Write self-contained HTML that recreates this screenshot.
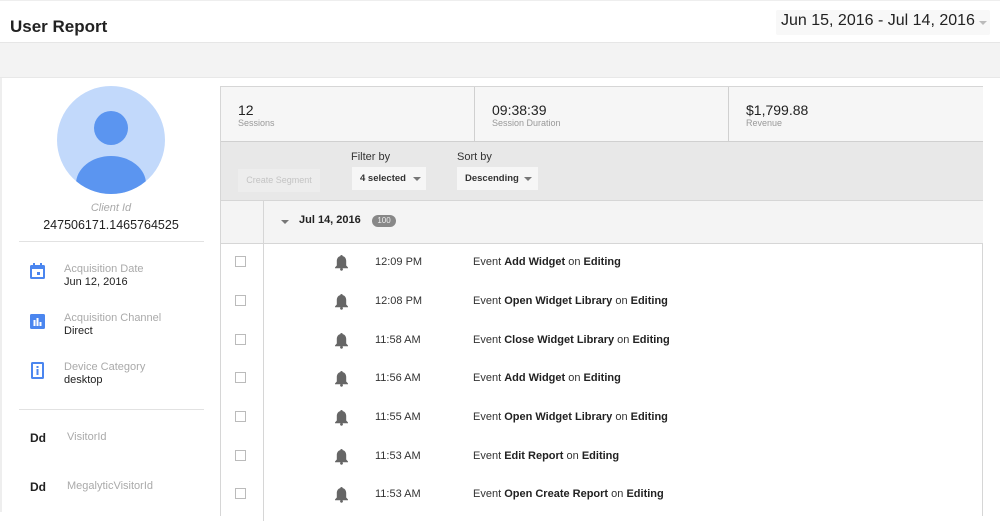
<!DOCTYPE html>
<html><head><style>
*{margin:0;padding:0;box-sizing:border-box}
body{width:1000px;height:512px;overflow:hidden;background:#fff;font-family:"Liberation Sans",Arial,sans-serif;color:#222;position:relative}
.a{position:absolute}
.hdr{left:0;top:0;width:1000px;height:43px;border-bottom:1px solid #e6e6e6;border-top:1px solid #eee}
.band{left:0;top:43px;width:1000px;height:35px;background:#f3f3f3;border-bottom:1px solid #e8e8e8}
.panel{left:220px;top:86px;width:763px;height:430px;border:1px solid #d6d6d6;border-bottom:none}
.stat{top:0;height:55px;background:#f6f6f6;border-right:1px solid #d0d0d0;border-bottom:1px solid #d0d0d0}
.stat b{font-weight:normal;font-size:14px;position:absolute;left:17px;top:15px;color:#222}
.stat i{font-style:normal;font-size:9px;color:#999;position:absolute;left:17px;top:31px}
.sel{background:#f6f6f6;font-size:9.5px;font-weight:bold;color:#333;height:23px;line-height:23px;padding-left:8px}
.tri{display:inline-block;border-left:4px solid transparent;border-right:4px solid transparent;border-top:4px solid #777;position:absolute;top:10px}
.row{left:0;width:763px;height:39px;font-size:11px}
.cb{position:absolute;left:14px;top:12px;width:11px;height:11px;border:1px solid #bbb}
.bell{position:absolute;left:113px;top:10px}
.tm{position:absolute;left:154px;top:12px;color:#333}
.ev{position:absolute;left:252px;top:12px;color:#333}
.ev b{color:#222}
.lab{color:#aaa;font-size:11px}
.val{color:#222;font-size:11px}
</style></head><body>
<div class="a hdr"></div>
<div class="a" style="left:10px;top:17px;font-size:17px;font-weight:bold;color:#222">User Report</div>
<div class="a" style="left:776px;top:10px;width:214px;height:25px;background:#f8f8f8;border-radius:2px"></div>
<div class="a" style="left:781px;top:12px;font-size:16px;color:#222">Jun 15, 2016 - Jul 14, 2016</div>
<div class="a tri" style="left:979px;top:21px;border-top-color:#bbb"></div>
<div class="a band"></div>
<div class="a" style="left:0;top:78px;width:2px;height:434px;background:#eee"></div>
<!-- avatar -->
<svg class="a" style="left:57px;top:86px" width="108" height="108" viewBox="0 0 108 108">
<defs><clipPath id="c"><circle cx="54" cy="54" r="54"/></clipPath></defs>
<circle cx="54" cy="54" r="54" fill="#c2d9fb"/>
<g clip-path="url(#c)"><circle cx="54" cy="42" r="17" fill="#5b95f0"/><ellipse cx="54" cy="98" rx="35" ry="28" fill="#5b95f0"/></g>
</svg>
<div class="a" style="left:0;width:222px;top:202px;text-align:center;font-size:11px;font-style:italic;color:#aaa">Client Id</div>
<div class="a" style="left:0;width:222px;top:218px;text-align:center;font-size:12.5px;color:#222">247506171.1465764525</div>
<div class="a" style="left:19px;top:241px;width:185px;height:1px;background:#e2e2e2"></div>
<svg class="a" style="left:29px;top:263px" width="17" height="17" viewBox="0 0 17 17"><rect x="1" y="2" width="15" height="14" rx="1.5" fill="#4b86ef"/><rect x="3" y="6" width="11" height="8" fill="#fff"/><rect x="8" y="9" width="3" height="3" fill="#4b86ef"/><rect x="4" y="0" width="2" height="4" fill="#4b86ef"/><rect x="11" y="0" width="2" height="4" fill="#4b86ef"/></svg>
<div class="a lab" style="left:64px;top:263px">Acquisition Date</div>
<div class="a val" style="left:64px;top:276px">Jun 12, 2016</div>
<svg class="a" style="left:29px;top:313px" width="17" height="17" viewBox="0 0 17 17"><rect x="1" y="1" width="15" height="15" rx="1.5" fill="#4b86ef"/><rect x="4.5" y="7" width="2" height="6" fill="#fff"/><rect x="7.5" y="5" width="2" height="8" fill="#fff"/><rect x="10.5" y="9" width="2" height="4" fill="#fff"/></svg>
<div class="a lab" style="left:64px;top:312px">Acquisition Channel</div>
<div class="a val" style="left:64px;top:325px">Direct</div>
<svg class="a" style="left:30px;top:361px" width="15" height="19" viewBox="0 0 15 19"><rect x="1" y="1" width="13" height="17" rx="1.5" fill="#4b86ef"/><rect x="3" y="3" width="9" height="13" fill="#fff"/><rect x="6.5" y="5" width="2" height="2" fill="#4b86ef"/><rect x="6.5" y="8" width="2" height="6" fill="#4b86ef"/></svg>
<div class="a lab" style="left:64px;top:361px">Device Category</div>
<div class="a val" style="left:64px;top:374px">desktop</div>
<div class="a" style="left:19px;top:409px;width:185px;height:1px;background:#e2e2e2"></div>
<div class="a" style="left:30px;top:431px;font-size:12px;font-weight:bold">Dd</div>
<div class="a lab" style="left:67px;top:431px">VisitorId</div>
<div class="a" style="left:30px;top:480px;font-size:12px;font-weight:bold">Dd</div>
<div class="a lab" style="left:67px;top:480px">MegalyticVisitorId</div>

<div class="a panel">
 <div class="a stat" style="left:0;width:254px"><b>12</b><i>Sessions</i></div>
 <div class="a stat" style="left:254px;width:254px"><b>09:38:39</b><i>Session Duration</i></div>
 <div class="a stat" style="left:508px;width:254px;border-right:none"><b>$1,799.88</b><i>Revenue</i></div>
 <div class="a" style="left:0;top:55px;width:762px;height:59px;background:#e8e8e8;border-bottom:1px solid #d6d6d6"></div>
 <div class="a" style="left:17px;top:82px;width:82px;height:23px;background:#ededed;color:#c4c4c4;font-size:9px;line-height:23px;text-align:center">Create Segment</div>
 <div class="a" style="left:130px;top:64px;font-size:11px;color:#333">Filter by</div>
 <div class="a sel" style="left:131px;top:80px;width:74px">4 selected<span class="tri" style="left:61px"></span></div>
 <div class="a" style="left:236px;top:64px;font-size:11px;color:#333">Sort by</div>
 <div class="a sel" style="left:236px;top:80px;width:81px">Descending<span class="tri" style="left:67px"></span></div>
 <div class="a" style="left:0;top:114px;width:762px;height:43px;background:#f4f4f4;border-bottom:1px solid #d6d6d6"></div>
 <div class="a" style="left:42px;top:114px;width:1px;height:320px;background:#d6d6d6"></div>
 <span class="tri" style="left:60px;top:133px"></span>
 <div class="a" style="left:78px;top:127px;font-size:11px;font-weight:bold">Jul 14, 2016</div>
 <div class="a" style="left:151px;top:128px;width:24px;height:12px;border-radius:6px;background:#888;color:#eee;font-size:8px;line-height:12px;text-align:center">100</div>
 <div class="a row" style="top:157px"><div class="cb"></div><svg class="bell" width="15" height="17" viewBox="0 0 15 17"><path d="M7.5 1c.8 0 1.2.5 1.2 1.1C11 2.7 12.2 4.6 12.2 7v4.5L14 13.5v.7H1v-.7l1.8-2V7c0-2.4 1.2-4.3 3.5-4.9C6.3 1.5 6.7 1 7.5 1z" fill="#666"/><circle cx="7.5" cy="15.3" r="1.4" fill="#666"/></svg><div class="tm">12:09 PM</div><div class="ev">Event <b>Add Widget</b> on <b>Editing</b></div></div>
 <div class="a row" style="top:196px"><div class="cb"></div><svg class="bell" width="15" height="17" viewBox="0 0 15 17"><path d="M7.5 1c.8 0 1.2.5 1.2 1.1C11 2.7 12.2 4.6 12.2 7v4.5L14 13.5v.7H1v-.7l1.8-2V7c0-2.4 1.2-4.3 3.5-4.9C6.3 1.5 6.7 1 7.5 1z" fill="#666"/><circle cx="7.5" cy="15.3" r="1.4" fill="#666"/></svg><div class="tm">12:08 PM</div><div class="ev">Event <b>Open Widget Library</b> on <b>Editing</b></div></div>
 <div class="a row" style="top:235px"><div class="cb"></div><svg class="bell" width="15" height="17" viewBox="0 0 15 17"><path d="M7.5 1c.8 0 1.2.5 1.2 1.1C11 2.7 12.2 4.6 12.2 7v4.5L14 13.5v.7H1v-.7l1.8-2V7c0-2.4 1.2-4.3 3.5-4.9C6.3 1.5 6.7 1 7.5 1z" fill="#666"/><circle cx="7.5" cy="15.3" r="1.4" fill="#666"/></svg><div class="tm">11:58 AM</div><div class="ev">Event <b>Close Widget Library</b> on <b>Editing</b></div></div>
 <div class="a row" style="top:273px"><div class="cb"></div><svg class="bell" width="15" height="17" viewBox="0 0 15 17"><path d="M7.5 1c.8 0 1.2.5 1.2 1.1C11 2.7 12.2 4.6 12.2 7v4.5L14 13.5v.7H1v-.7l1.8-2V7c0-2.4 1.2-4.3 3.5-4.9C6.3 1.5 6.7 1 7.5 1z" fill="#666"/><circle cx="7.5" cy="15.3" r="1.4" fill="#666"/></svg><div class="tm">11:56 AM</div><div class="ev">Event <b>Add Widget</b> on <b>Editing</b></div></div>
 <div class="a row" style="top:312px"><div class="cb"></div><svg class="bell" width="15" height="17" viewBox="0 0 15 17"><path d="M7.5 1c.8 0 1.2.5 1.2 1.1C11 2.7 12.2 4.6 12.2 7v4.5L14 13.5v.7H1v-.7l1.8-2V7c0-2.4 1.2-4.3 3.5-4.9C6.3 1.5 6.7 1 7.5 1z" fill="#666"/><circle cx="7.5" cy="15.3" r="1.4" fill="#666"/></svg><div class="tm">11:55 AM</div><div class="ev">Event <b>Open Widget Library</b> on <b>Editing</b></div></div>
 <div class="a row" style="top:351px"><div class="cb"></div><svg class="bell" width="15" height="17" viewBox="0 0 15 17"><path d="M7.5 1c.8 0 1.2.5 1.2 1.1C11 2.7 12.2 4.6 12.2 7v4.5L14 13.5v.7H1v-.7l1.8-2V7c0-2.4 1.2-4.3 3.5-4.9C6.3 1.5 6.7 1 7.5 1z" fill="#666"/><circle cx="7.5" cy="15.3" r="1.4" fill="#666"/></svg><div class="tm">11:53 AM</div><div class="ev">Event <b>Edit Report</b> on <b>Editing</b></div></div>
 <div class="a row" style="top:389px"><div class="cb"></div><svg class="bell" width="15" height="17" viewBox="0 0 15 17"><path d="M7.5 1c.8 0 1.2.5 1.2 1.1C11 2.7 12.2 4.6 12.2 7v4.5L14 13.5v.7H1v-.7l1.8-2V7c0-2.4 1.2-4.3 3.5-4.9C6.3 1.5 6.7 1 7.5 1z" fill="#666"/><circle cx="7.5" cy="15.3" r="1.4" fill="#666"/></svg><div class="tm">11:53 AM</div><div class="ev">Event <b>Open Create Report</b> on <b>Editing</b></div></div>
</div>
</body></html>
